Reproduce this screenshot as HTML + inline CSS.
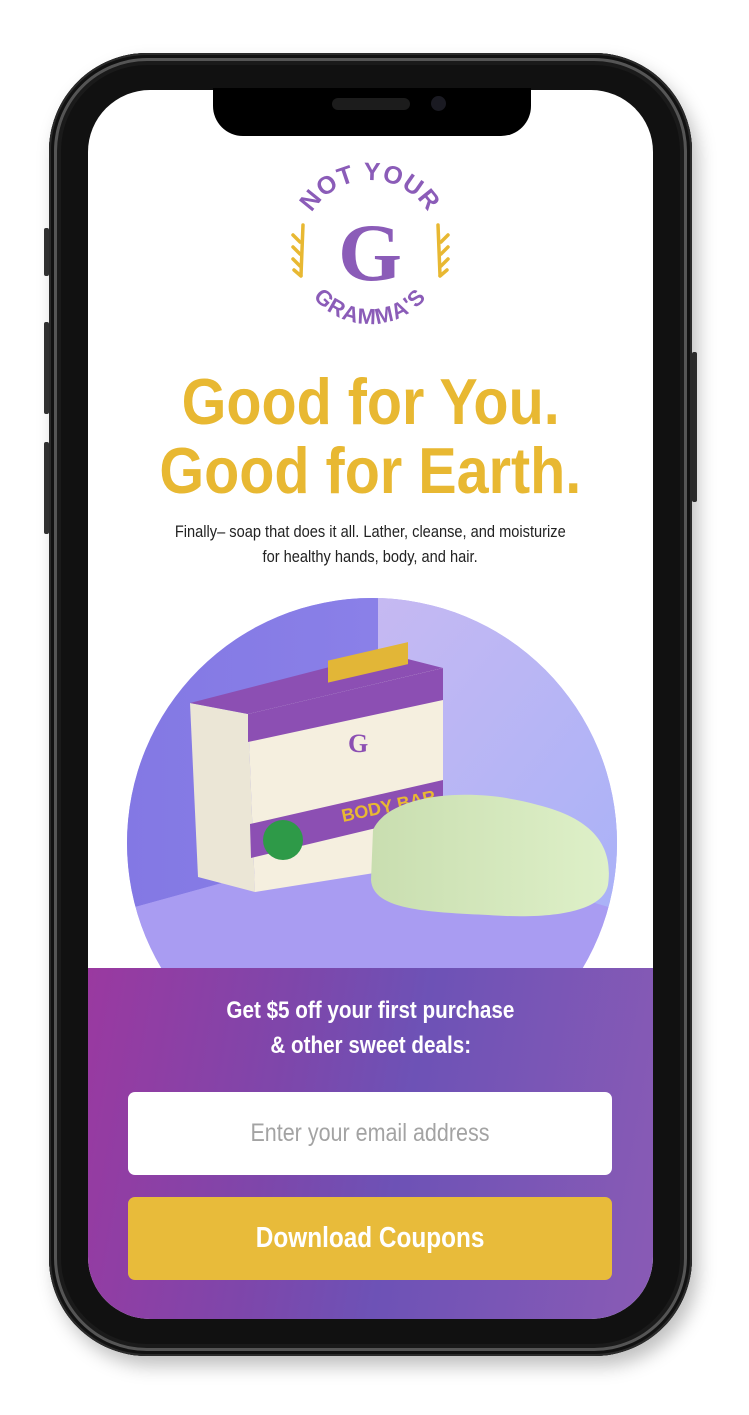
<!DOCTYPE html>
<html><head><meta charset="utf-8">
<style>
*{margin:0;padding:0;box-sizing:border-box}
html,body{width:749px;height:1415px;background:#fff;overflow:hidden;font-family:"Liberation Sans",sans-serif}
.phone{position:absolute;left:49px;top:53px;width:643px;height:1303px;border-radius:98px;background:#111;box-shadow:6px 10px 18px rgba(0,0,0,.25), inset 0 0 0 2px #2a2a2a, inset 0 0 0 5px #111, inset 0 0 0 8px #555, inset 0 0 0 12px #1a1a1a}
.btn{position:absolute;background:#333;width:5px;border-radius:2px}
.screen{position:absolute;left:88px;top:90px;width:565px;height:1229px;border-radius:62px;background:#fff;overflow:hidden}
.notch{position:absolute;left:213px;top:88px;width:318px;height:48px;background:#000;border-radius:0 0 30px 30px}
.spk{position:absolute;left:332px;top:98px;width:78px;height:12px;border-radius:6px;background:#1c1c1c}
.cam{position:absolute;left:431px;top:96px;width:15px;height:15px;border-radius:50%;background:#1a1a22}
.h1{position:absolute;left:0;width:565px;text-align:center;color:#e8b832;font-weight:bold;font-size:65px;line-height:65px}
.h1 span{display:inline-block;transform:scaleX(.885)}
.p{position:absolute;left:0;width:565px;text-align:center;color:#222;font-size:17px;line-height:25px}
.p span{display:inline-block;transform:scaleX(.86)}
.purple{position:absolute;left:0;top:878px;width:565px;height:360px;background:linear-gradient(100deg,#9a39a0 0%,#7d47ab 35%,#6d52b6 55%,#8a5bb5 100%)}
.offer{position:absolute;top:25px;left:0;width:565px;text-align:center;color:#fff;font-weight:bold;font-size:24px;line-height:35px}
.offer span{display:inline-block;transform:scaleX(.86)}
.inp{position:absolute;left:40px;top:124px;width:484px;height:83px;background:#fff;border-radius:7px;text-align:center;line-height:83px;color:#a3a3a3;font-size:25px}
.inp span{display:inline-block;transform:scaleX(.86)}
.cta{position:absolute;left:40px;top:229px;width:484px;height:83px;background:#e8bb3a;border-radius:7px;text-align:center;line-height:83px;color:#fff;font-size:29px;font-weight:bold}
.cta span{display:inline-block;transform:scaleX(.84)}
</style></head><body>
<div class="btn" style="left:44px;top:228px;height:48px"></div>
<div class="btn" style="left:44px;top:322px;height:92px"></div>
<div class="btn" style="left:44px;top:442px;height:92px"></div>
<div class="btn" style="left:692px;top:352px;height:150px"></div>
<div class="phone"></div>
<div class="screen">
  <svg width="565" height="300" style="position:absolute;left:0;top:0">
    <defs>
      <path id="arcT" d="M214,158 A68,68 0 0 1 350,158"/>
      <path id="arcB" d="M208,160 A74,74 0 0 0 356,160"/>
    </defs>
    <text font-family="Liberation Sans,sans-serif" font-weight="bold" font-size="25" fill="#8b5cb8" letter-spacing="1"><textPath href="#arcT" startOffset="50%" text-anchor="middle">NOT YOUR</textPath></text>
    <text font-family="Liberation Sans,sans-serif" font-weight="bold" font-size="22" fill="#8b5cb8" letter-spacing="1"><textPath href="#arcB" startOffset="50%" text-anchor="middle">GRAMMA'S</textPath></text>
    <text x="282" y="190" text-anchor="middle" font-family="Liberation Serif,serif" font-weight="bold" font-size="82" fill="#8b5cb8">G</text>
    <g stroke="#e8b832" stroke-width="3.5" fill="none" stroke-linecap="round">
      <path d="M215,135 L213,185"/>
      <path d="M205,145 l7,7 M205,157 l7,7 M205,169 l7,7 M206,180 l7,6"/>
      <path d="M350,135 L352,185"/>
      <path d="M360,145 l-7,7 M360,157 l-7,7 M360,169 l-7,7 M359,180 l-7,6"/>
    </g>
  </svg>
  <div class="h1" style="top:279px"><span>Good for You.</span></div>
  <div class="h1" style="top:348px"><span>Good for Earth.</span></div>
  <div class="p" style="top:429px"><span>Finally– soap that does it all. Lather, cleanse, and moisturize</span><br><span>for healthy hands, body, and hair.</span></div>
  <svg width="565" height="400" style="position:absolute;left:0;top:500px">
    <defs>
      <clipPath id="c"><circle cx="284" cy="253" r="245"/></clipPath>
      <linearGradient id="wall" x1="0" x2="1"><stop offset="0" stop-color="#8277e3"/><stop offset="1" stop-color="#8a80e8"/></linearGradient>
      <linearGradient id="wall2" x1="0" x2="1" y1="0" y2="1"><stop offset="0" stop-color="#c6b9f2"/><stop offset="1" stop-color="#a7b1f8"/></linearGradient>
      <linearGradient id="soap" x1="0" x2="1"><stop offset="0" stop-color="#c9deb0"/><stop offset="1" stop-color="#def0c8"/></linearGradient>
    </defs>
    <g clip-path="url(#c)">
      <rect x="0" y="0" width="565" height="400" fill="#a89ef2"/>
      <polygon points="0,0 290,0 290,250 0,330" fill="url(#wall)"/>
      <polygon points="290,0 565,0 565,330 290,250" fill="url(#wall2)"/>
      <polygon points="0,330 290,250 565,330 565,400 0,400" fill="#a99cf2"/>
    </g>
    <polygon points="102,113 160,124 167,302 110,287" fill="#ebe6d6"/>
    <polygon points="102,113 296,63 355,78 160,124" fill="#8c4fb3"/>
    <polygon points="160,124 355,78 355,272 167,302" fill="#f5efdf"/>
    <polygon points="160,124 355,78 355,110 160,152" fill="#8c4fb3"/>
    <rect x="240" y="71" width="80" height="22" fill="#e2b637" transform="skewY(-13) translate(0,55)"/>
    <polygon points="162,234 355,190 355,222 163,268" fill="#8c4fb3"/>
    <circle cx="195" cy="250" r="20" fill="#2e9a48"/>
    <text x="255" y="232" font-family="Liberation Sans" font-weight="bold" font-size="18" fill="#e8b832" transform="rotate(-12 255 232)">BODY BAR</text>
    <text x="260" y="162" font-family="Liberation Serif" font-weight="bold" font-size="26" fill="#8c4fb3">G</text>
    <path d="M285,240 C300,205 380,195 450,215 C510,230 525,260 520,295 C515,320 470,330 400,325 C330,322 285,318 283,290 Z" fill="url(#soap)"/>
  </svg>
  <div class="purple">
    <div class="offer"><span>Get $5 off your first purchase</span><br><span>&amp; other sweet deals:</span></div>
    <div class="inp"><span>Enter your email address</span></div>
    <div class="cta"><span>Download Coupons</span></div>
  </div>
</div>
<div class="notch"></div>
<div class="spk"></div>
<div class="cam"></div>
</body></html>
